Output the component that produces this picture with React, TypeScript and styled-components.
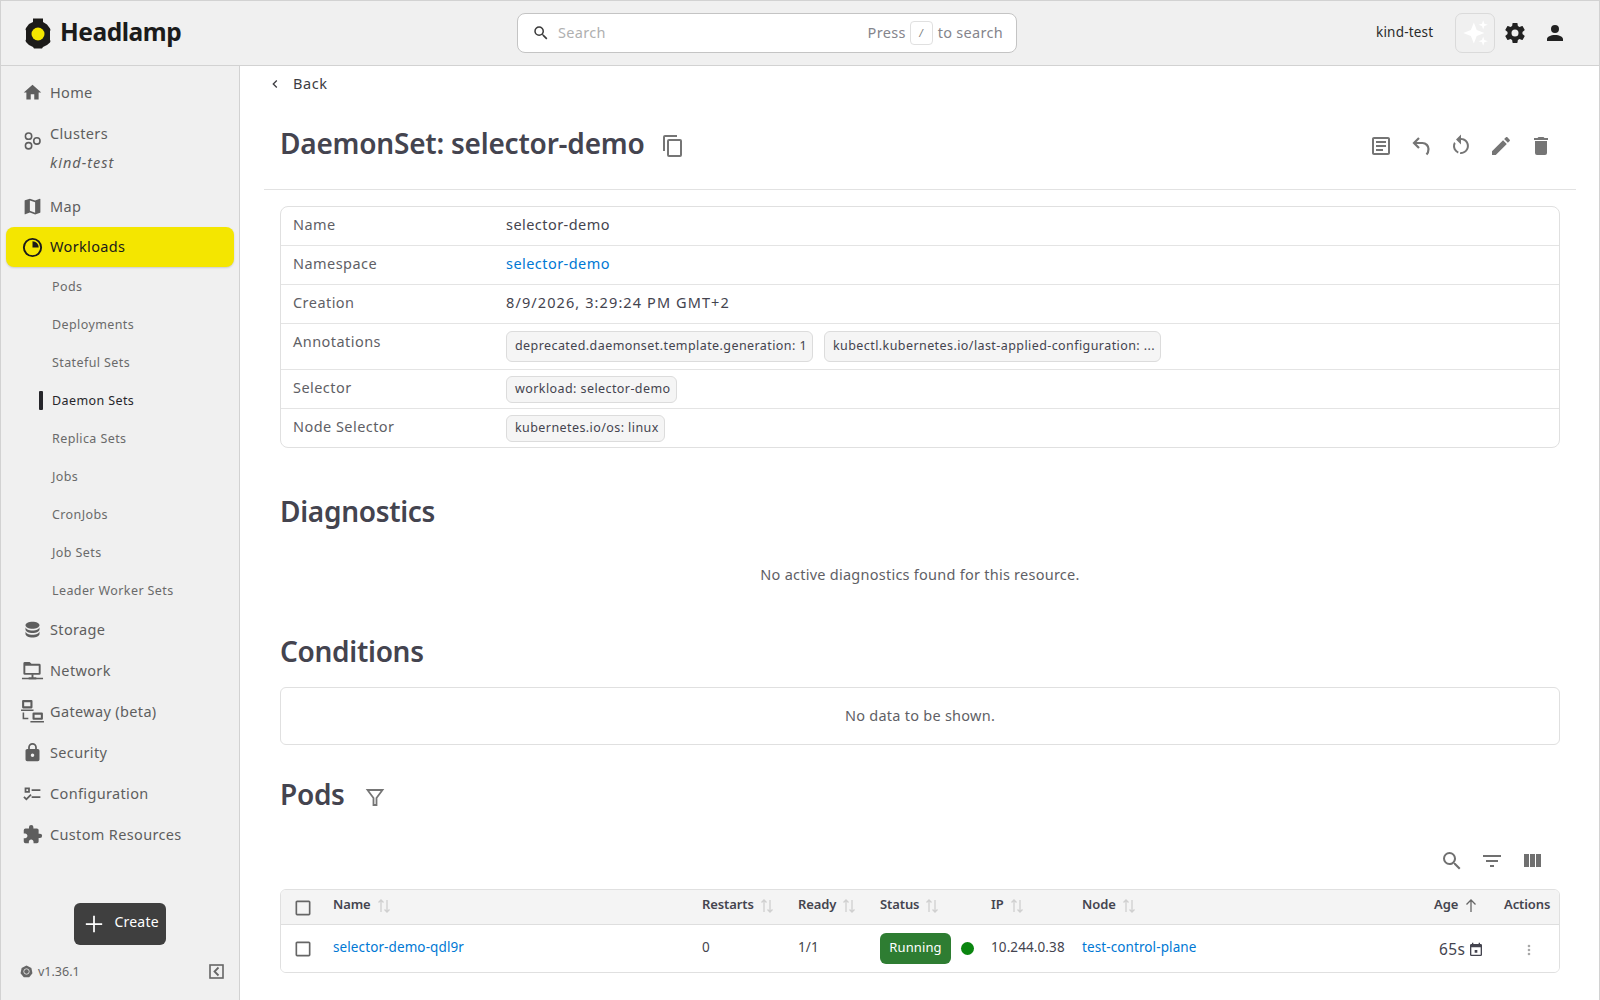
import React from "react";
import styled, { createGlobalStyle } from "styled-components";

const FONT = `"Noto Sans", "Liberation Sans", sans-serif`;

const Global = createGlobalStyle`
  html, body { margin: 0; padding: 0; background: #fff; }
  * { box-sizing: border-box; }
  body { font-family: ${FONT}; }
`;

const Frame = styled.div`
  width: 1600px;
  height: 1000px;
  display: flex;
  flex-direction: column;
  overflow: hidden;
  border: 1px solid #d2d2d2;
  border-bottom: 0;
  color: #44444f;
`;

/* top bar */
const TopBar = styled.header`
  height: 65px;
  flex: none;
  display: flex;
  align-items: center;
  background: #f0f0f0;
  border-bottom: 1px solid #d2d2d2;
  padding-left: 24px;
`;
const Brand = styled.div`
  width: 492px;
  display: flex;
  align-items: center;
  gap: 9px;
`;
const BrandName = styled.span`
  font-size: 24.5px;
  font-weight: 700;
  letter-spacing: -0.45px;
  color: #1b1b1b;
  padding-bottom: 3px;
`;
const SearchBox = styled.div`
  width: 500px;
  height: 40px;
  background: #fff;
  border: 1px solid #c4c4c4;
  border-radius: 8px;
  display: flex;
  align-items: center;
  padding: 0 13px 3px 14px;
  font-size: 14.5px;
  letter-spacing: 0.3px;
  color: #85858c;
`;
const SearchIcon = styled.span`
  display: flex;
  margin-top: 3px;
  color: #3a3a3a;
`;
const Placeholder = styled.span`
  margin-left: 8px;
  margin-right: auto;
  color: #b0b0b0;
`;
const Kbd = styled.span`
  width: 23px;
  height: 24px;
  margin: 3px 5px 0 4px;
  border: 1px solid #e0e0e0;
  border-radius: 4px;
  display: flex;
  align-items: center;
  justify-content: center;
  font-size: 10px;
  font-style: italic;
  color: #777;
`;
const TopRight = styled.div`
  flex: 1;
  display: flex;
  align-items: center;
  color: #2a2a2a;
`;
const ClusterName = styled.span`
  margin-left: 359px;
  width: 79px;
  padding-bottom: 2px;
  font-size: 13.5px;
  letter-spacing: 0.2px;
`;
const AiButton = styled.div`
  width: 40px;
  height: 40px;
  margin-right: 8px;
  border: 1px solid #dadada;
  border-radius: 7px;
  display: flex;
  align-items: center;
  justify-content: center;
  color: #fff;
`;
const TopIcon = styled.div`
  width: 24px;
  height: 24px;
  margin-right: 16px;
  color: #222;
`;

const Body = styled.div`
  flex: 1;
  display: flex;
  min-height: 0;
`;

/* sidebar */
const Sidebar = styled.aside`
  width: 239px;
  flex: none;
  background: #f0f0f0;
  border-right: 1px solid #d2d2d2;
  padding: 6px 0 0;
  display: flex;
  flex-direction: column;
`;
const NavItem = styled.div<{ $active?: boolean }>`
  height: 41px;
  flex: none;
  display: flex;
  align-items: center;
  gap: 7px;
  padding: 0 0 2px 21px;
  font-size: 14.5px;
  letter-spacing: 0.35px;
  color: ${(p) => (p.$active ? "#1a1a1a" : "#5e5e5e")};
  ${(p) =>
    p.$active &&
    `
    margin: 0 5px;
    padding-left: 16px;
    height: 40px;
    background: #f4e600;
    border-radius: 8px;
    box-shadow: 0 1px 2px rgba(0,0,0,.15);
  `}
`;
const NavIcon = styled.svg<{ $size?: number }>`
  width: ${(p) => p.$size ?? 21}px;
  height: ${(p) => p.$size ?? 21}px;
  margin: 2px ${(p) => (21 - (p.$size ?? 21)) / 2}px 0;
  flex: none;
  fill: currentColor;
`;
const ClusterItem = styled.div`
  height: 73px;
  flex: none;
  display: flex;
  align-items: center;
  gap: 7px;
  padding-left: 21px;
  color: #5e5e5e;
  font-size: 14.5px;
  letter-spacing: 0.35px;
`;
const ClusterGlyph = styled.svg`
  width: 21px;
  height: 21px;
  flex: none;
  margin-top: -18px;
  fill: none;
  stroke: currentColor;
  stroke-width: 1.8;
`;
const ClusterText = styled.div`
  display: flex;
  flex-direction: column;
  gap: 8px;
  margin-top: -3px;
  line-height: 21px;
  em {
    letter-spacing: 1px;
  }
`;
const SubNav = styled.div`
  display: flex;
  flex-direction: column;
`;
const SubItem = styled.div<{ $active?: boolean }>`
  height: 38px;
  display: flex;
  align-items: center;
  padding-left: ${(p) => (p.$active ? "38px" : "51px")};
  font-size: 12.5px;
  letter-spacing: 0.4px;
  color: ${(p) => (p.$active ? "#26262b" : "#6a6a6a")};
  &::before {
    content: "";
    display: ${(p) => (p.$active ? "block" : "none")};
    width: 4px;
    height: 19px;
    margin-right: 9px;
    border-radius: 1px;
    background: #26262b;
  }
`;
const SideFooter = styled.div`
  margin-top: auto;
  display: flex;
  flex-direction: column;
`;
const CreateButton = styled.div`
  align-self: center;
  width: 92px;
  height: 42px;
  margin-left: -1px;
  background: #3f3f3f;
  border-radius: 6px;
  display: flex;
  align-items: center;
  gap: 7px;
  padding-left: 6px;
  color: #fff;
  font-size: 14px;
  letter-spacing: 0.2px;
`;
const CreateLabel = styled.span`
  padding-bottom: 6px;
`;
const VersionRow = styled.div`
  height: 55px;
  display: flex;
  align-items: center;
  padding: 0 15px 2px 19px;
  font-size: 12.5px;
  color: #666;
  gap: 5px;
`;
const CollapseBox = styled.svg`
  margin-left: auto;
  width: 15px;
  height: 15px;
  fill: none;
  stroke: #666;
  stroke-width: 1.6;
`;

/* main */
const Main = styled.main`
  flex: 1;
  min-width: 0;
  padding: 0 23px 0 24px;
  background: #fff;
`;
const BackRow = styled.div`
  height: 36px;
  display: flex;
  align-items: center;
  gap: 10px;
  padding: 0 0 2px 3px;
  font-size: 14.5px;
  letter-spacing: 0.55px;
  color: #3c3c42;
`;
const BackChevron = styled.span`
  display: flex;
  margin-top: 2px;
`;
const TitleRow = styled.div`
  height: 88px;
  display: flex;
  align-items: center;
  padding: 0 23px 6px 16px;
  border-bottom: 1px solid #e2e2e2;
`;
const Title = styled.h1`
  margin: 0;
  font-size: 28px;
  line-height: 40px;
  font-weight: 600;
  letter-spacing: -0.22px;
  color: #44444f;
`;
const CopyButton = styled.span`
  margin: 6px 0 0 16px;
  color: #757575;
`;
const Actions = styled.div`
  margin: 6px 0 0 auto;
  display: flex;
  gap: 16px;
  color: #757575;
`;
const ActionIcon = styled.svg<{ $size?: number }>`
  width: ${(p) => p.$size ?? 24}px;
  height: ${(p) => p.$size ?? 24}px;
  fill: currentColor;
  display: block;
`;
const StrokeIcon = styled.svg`
  width: 24px;
  height: 24px;
  display: block;
  fill: none;
  stroke: currentColor;
`;
const Content = styled.div`
  padding: 0 16px;
`;
const InfoTable = styled.div`
  margin-top: 16px;
  border: 1px solid #e0e0e0;
  border-radius: 8px;
`;
const InfoRow = styled.div<{ $height: number }>`
  height: ${(p) => p.$height}px;
  display: grid;
  grid-template-columns: 213px 1fr;
  padding-left: 12px;
  font-size: 14.5px;
  letter-spacing: 0.45px;
  & + & {
    border-top: 1px solid #e4e4e4;
  }
`;
const InfoLabel = styled.div`
  color: #5f5f66;
  padding-top: 7px;
  line-height: 20px;
`;
const InfoValue = styled.div`
  color: #44444f;
  display: flex;
  gap: 11px;
  align-items: center;
  padding-bottom: 4px;
`;
const Timestamp = styled.span`
  letter-spacing: 1.1px;
`;
const Link = styled.span`
  color: #0078d4;
`;
const Chip = styled.span<{ $tall?: boolean }>`
  height: ${(p) => (p.$tall ? 31 : 27)}px;
  margin-top: 4px;
  display: inline-flex;
  align-items: center;
  padding: 0 5px 2px 8px;
  background: #f5f5f5;
  border: 1px solid #dcdcdc;
  border-radius: 6px;
  font-size: 12.5px;
  letter-spacing: 0.42px;
  color: #44444f;
  white-space: nowrap;
`;
const SectionTitle = styled.h2<{ $gap: number }>`
  margin: ${(p) => p.$gap}px 0 0;
  font-size: 28px;
  line-height: 40px;
  font-weight: 600;
  letter-spacing: -0.3px;
  color: #44444f;
  display: flex;
  align-items: center;
  gap: 18px;
`;
const PodsFilter = styled.span`
  margin-top: 6px;
  color: #757575;
`;
const Message = styled.div`
  margin-top: 33px;
  text-align: center;
  font-size: 14.5px;
  line-height: 20px;
  letter-spacing: 0.25px;
  color: #5f5f66;
`;
const EmptyBox = styled.div`
  margin-top: 16px;
  height: 58px;
  padding-bottom: 3px;
  border: 1px solid #e0e0e0;
  border-radius: 6px;
  display: flex;
  align-items: center;
  justify-content: center;
  font-size: 14.5px;
  letter-spacing: 0.25px;
  color: #5f5f66;
`;
const TableTools = styled.div`
  margin-top: 27px;
  height: 40px;
  display: flex;
  justify-content: flex-end;
  align-items: center;
  gap: 16px;
  padding-right: 16px;
  color: #707070;
`;
const PodTable = styled.div`
  margin-top: 8px;
  border: 1px solid #e0e0e0;
  border-radius: 6px;
  overflow: hidden;
`;
const PodRow = styled.div<{ $head?: boolean }>`
  display: grid;
  grid-template-columns: 52px 369px 96px 82px 111px 91px 352px 70px 56px;
  align-items: center;
  height: ${(p) => (p.$head ? 35 : 47)}px;
  background: ${(p) => (p.$head ? "#f4f4f4" : "#fff")};
  ${(p) => p.$head && "border-bottom: 1px solid #dedede;"}
  font-size: ${(p) => (p.$head ? "13px" : "13.5px")};
  font-weight: ${(p) => (p.$head ? 600 : 400)};
  letter-spacing: ${(p) => (p.$head ? "-0.1px" : "0.1px")};
  color: #44444f;
  > span {
    margin-bottom: 4px;
  }
`;
const HeadCell = styled.div`
  display: flex;
  align-items: center;
  gap: 6px;
  padding-bottom: 6px;
  white-space: nowrap;
`;
const CheckCell = styled.div<{ $head?: boolean }>`
  display: flex;
  padding-left: 12px;
  margin-top: ${(p) => (p.$head ? 2 : 0)}px;
  color: #666;
`;
const CheckIcon = styled.svg`
  width: 20px;
  height: 20px;
  fill: currentColor;
`;
const SortIcon = styled.svg<{ $active?: boolean }>`
  width: 14px;
  height: 16px;
  margin-top: 4px;
  fill: none;
  stroke: ${(p) => (p.$active ? "#666" : "#cfcfcf")};
  stroke-width: 1.3;
`;
const StatusCell = styled.div`
  display: flex;
  align-items: center;
  gap: 10px;
`;
const StatusChip = styled.span`
  height: 31px;
  width: 71px;
  padding-bottom: 3px;
  display: flex;
  align-items: center;
  justify-content: center;
  border-radius: 6px;
  background: #2e7d32;
  color: #fff;
  font-size: 13px;
`;
const StatusDot = styled.span`
  width: 13px;
  height: 13px;
  border-radius: 50%;
  background: #0a850f;
`;
const AgeCell = styled.div`
  display: flex;
  align-items: center;
  gap: 3px;
  padding-left: 5px;
  font-size: 15.5px;
  letter-spacing: 0.4px;
`;
const SmallIcon = styled.svg`
  width: 16px;
  height: 16px;
  margin-top: 2px;
  fill: currentColor;
  flex: none;
`;
const MoreCell = styled.div`
  display: flex;
  padding-left: 17px;
  color: #a8a8a8;
`;

const P = {
  home: "M10,20V14H14V20H19V12H22L12,3L2,12H5V20H10Z",
  map: "M15,19L9,16.89V5L15,7.11M20.5,3C20.44,3 20.39,3 20.34,3L15,5.1L9,3L3.36,4.9C3.15,4.97 3,5.15 3,5.38V20.5A0.5,0.5 0 0,0 3.5,21L3.66,20.97L9,18.9L15,21L20.64,19.1C20.85,19 21,18.85 21,18.62V3.5A0.5,0.5 0 0,0 20.5,3Z",
  database: "M12,3C7.58,3 4,4.79 4,7C4,9.21 7.58,11 12,11C16.42,11 20,9.21 20,7C20,4.79 16.42,3 12,3M4,9V12C4,14.21 7.58,16 12,16C16.42,16 20,14.21 20,12V9C20,11.21 16.42,13 12,13C7.58,13 4,11.21 4,9M4,14V17C4,19.21 7.58,21 12,21C16.42,21 20,19.21 20,17V14C20,16.21 16.42,18 12,18C7.58,18 4,16.21 4,14Z",
  lock: "M12,17A2,2 0 0,0 14,15C14,13.89 13.1,13 12,13A2,2 0 0,0 10,15A2,2 0 0,0 12,17M18,8A2,2 0 0,1 20,10V20A2,2 0 0,1 18,22H6A2,2 0 0,1 4,20V10C4,8.89 4.9,8 6,8H7V6A5,5 0 0,1 12,1A5,5 0 0,1 17,6V8H18M12,3A3,3 0 0,0 9,6V8H15V6A3,3 0 0,0 12,3Z",
  checks: "M3,5H9V11H3V5M5,7V9H7V7H5M11,7H21V9H11V7M11,15H21V17H11V15M5,20L1.5,16.5L2.91,15.09L5,17.17L9.59,12.59L11,14L5,20Z",
  puzzle: "M20.5,11H19V7C19,5.89 18.1,5 17,5H13V3.5A2.5,2.5 0 0,0 10.5,1A2.5,2.5 0 0,0 8,3.5V5H4A2,2 0 0,0 2,7V10.8H3.5C5,10.8 6.2,12 6.2,13.5C6.2,15 5,16.2 3.5,16.2H2V20A2,2 0 0,0 4,22H7.8V20.5C7.8,19 9,17.8 10.5,17.8C12,17.8 13.2,19 13.2,20.5V22H17A2,2 0 0,0 19,20V16H20.5A2.5,2.5 0 0,0 23,13.5A2.5,2.5 0 0,0 20.5,11Z",
  copy: "M19,21H8V7H19M19,5H8A2,2 0 0,0 6,7V21A2,2 0 0,0 8,23H19A2,2 0 0,0 21,21V7A2,2 0 0,0 19,5M16,1H4A2,2 0 0,0 2,3V17H4V3H16V1Z",
  text: "M5,3C3.89,3 3,3.89 3,5V19C3,20.11 3.89,21 5,21H19C20.11,21 21,20.11 21,19V5C21,3.89 20.11,3 19,3H5M5,5H19V19H5V5M7,7V9H17V7H7M7,11V13H17V11H7M7,15V17H14V15H7Z",
  restart: "M12,4C14.1,4 16.1,4.8 17.6,6.3C20.7,9.4 20.7,14.5 17.6,17.6C15.8,19.5 13.3,20.2 10.9,19.9L11.4,17.9C13.1,18.1 14.9,17.5 16.2,16.2C18.5,13.9 18.5,10.1 16.2,7.7C15.1,6.6 13.5,6 12,6V10.6L7,5.6L12,0.6V4M6.3,17.6C3.7,15 3.3,11 5.1,7.9L6.6,9.4C5.5,11.6 5.9,14.4 7.8,16.2C8.3,16.7 8.9,17.1 9.6,17.4L9,19.4C8,19 7.1,18.4 6.3,17.6Z",
  pencil: "M20.71,7.04C21.1,6.65 21.1,6 20.71,5.63L18.37,3.29C18,2.9 17.35,2.9 16.96,3.29L15.12,5.12L18.87,8.87M3,17.25V21H6.75L17.81,9.93L14.06,6.18L3,17.25Z",
  trash: "M19,4H15.5L14.5,3H9.5L8.5,4H5V6H19M6,19A2,2 0 0,0 8,21H16A2,2 0 0,0 18,19V7H6V19Z",
  cog: "M12,15.5A3.5,3.5 0 0,1 8.5,12A3.5,3.5 0 0,1 12,8.5A3.5,3.5 0 0,1 15.5,12A3.5,3.5 0 0,1 12,15.5M19.43,12.97C19.47,12.65 19.5,12.33 19.5,12C19.5,11.67 19.47,11.34 19.43,11L21.54,9.37C21.73,9.22 21.78,8.95 21.66,8.73L19.66,5.27C19.54,5.05 19.27,4.96 19.05,5.05L16.56,6.05C16.04,5.66 15.5,5.32 14.87,5.07L14.5,2.42C14.46,2.18 14.25,2 14,2H10C9.75,2 9.54,2.18 9.5,2.42L9.13,5.07C8.5,5.32 7.96,5.66 7.44,6.05L4.95,5.05C4.73,4.96 4.46,5.05 4.34,5.27L2.34,8.73C2.21,8.95 2.27,9.22 2.46,9.37L4.57,11C4.53,11.34 4.5,11.67 4.5,12C4.5,12.33 4.53,12.65 4.57,12.97L2.46,14.63C2.27,14.78 2.21,15.05 2.34,15.27L4.34,18.73C4.46,18.95 4.73,19.03 4.95,18.95L7.44,17.94C7.96,18.34 8.5,18.68 9.13,18.93L9.5,21.58C9.54,21.82 9.75,22 10,22H14C14.25,22 14.46,21.82 14.5,21.58L14.87,18.93C15.5,18.67 16.04,18.34 16.56,17.94L19.05,18.95C19.27,19.03 19.54,18.95 19.66,18.73L21.66,15.27C21.78,15.05 21.73,14.78 21.54,14.63L19.43,12.97Z",
  account: "M12,4A4,4 0 0,1 16,8A4,4 0 0,1 12,12A4,4 0 0,1 8,8A4,4 0 0,1 12,4M12,14C16.42,14 20,15.79 20,18V20H4V18C4,15.79 7.58,14 12,14Z",
  magnify: "M9.5,3A6.5,6.5 0 0,1 16,9.5C16,11.11 15.41,12.59 14.44,13.73L14.71,14H15.5L20.5,19L19,20.5L14,15.5V14.71L13.73,14.44C12.59,15.41 11.11,16 9.5,16A6.5,6.5 0 0,1 3,9.5A6.5,6.5 0 0,1 9.5,3M9.5,5C7,5 5,7 5,9.5C5,12 7,14 9.5,14C12,14 14,12 14,9.5C14,7 12,5 9.5,5Z",
  filterVariant: "M6,13H18V11H6M3,6V8H21V6M10,18H14V16H10V18Z",
  columns: "M16,5V18H21V5M4,18H9V5H4M10,18H15V5H10V18Z",
  calendar: "M19,3H18V1H16V3H8V1H6V3H5C3.89,3 3,3.9 3,5V19A2,2 0 0,0 5,21H19A2,2 0 0,0 21,19V5A2,2 0 0,0 19,3M19,19H5V8H19V19M10,12H14V16H10V12Z",
  dots: "M12,16A2,2 0 0,1 14,18A2,2 0 0,1 12,20A2,2 0 0,1 10,18A2,2 0 0,1 12,16M12,10A2,2 0 0,1 14,12A2,2 0 0,1 12,14A2,2 0 0,1 10,12A2,2 0 0,1 12,10M12,4A2,2 0 0,1 14,6A2,2 0 0,1 12,8A2,2 0 0,1 10,6A2,2 0 0,1 12,4Z",
  box: "M19,3H5C3.89,3 3,3.89 3,5V19A2,2 0 0,0 5,21H19A2,2 0 0,0 21,19V5C21,3.89 20.1,3 19,3M19,5V19H5V5H19Z",
  chevron: "M15.41,16.58L10.83,12L15.41,7.41L14,6L8,12L14,18L15.41,16.58Z",
  plus: "M19,12.75H12.75V19H11.25V12.75H5V11.25H11.25V5H12.75V11.25H19V12.75Z",
  spark: "M11 3l2.500 6.500L20 12l-6.500 2.500L11 21l-2.500-6.500L2 12l6.500-2.500zM19 1l1 3 3 1-3 1-1 3-1-3-3-1 3-1zM19 15l1 3 3 1-3 1-1 3-1-3-3-1 3-1z",
};

const Glyph = ({ d, size }: { d: string; size?: number }) => (
  <ActionIcon viewBox="0 0 24 24" $size={size}>
    <path d={d} />
  </ActionIcon>
);

const Logo = () => (
  <svg width="26" height="31" viewBox="0 0 26 31">
    <path
      fill="#1c1b19"
      d="M8 .5h10V4l4 2.500 3 4 .5 1.500-.5 1v9l.5 1-.5 1.500L22 27l-4 2-1 1.500H9L8 29l-4-2-3-3-.5-1.500.5-1v-9l-.5-1 .5-1.500 3-4L8 4z"
    />
    <circle cx="13" cy="16" r="6.500" fill="#f4e600" />
  </svg>
);

const ClusterIcon = () => (
  <ClusterGlyph viewBox="0 0 24 24">
    <circle cx="7.500" cy="7" r="3.600" />
    <circle cx="7.500" cy="18" r="3.600" />
    <circle cx="17" cy="12.500" r="3.600" />
  </ClusterGlyph>
);

const WorkloadIcon = () => (
  <NavIcon viewBox="0 0 24 24" $size={23}>
    <path d="M12 2a10 10 0 1 0 0 20 10 10 0 0 0 0-20zm0 2a8 8 0 1 1 0 16 8 8 0 0 1 0-16z" />
    <path d="M12 5.500V12h6.500A6.500 6.500 0 0 0 12 5.500z" />
  </NavIcon>
);

const NetworkIcon = () => (
  <NavIcon viewBox="0 0 24 24" $size={23}>
    <path d="M4 3h5l2 2h8a1.500 1.500 0 0 1 1.500 1.500V15a1.500 1.500 0 0 1-1.500 1.500H4A1.500 1.500 0 0 1 2.500 15V4.500A1.500 1.500 0 0 1 4 3zm.500 4v7.500h14V7z" />
    <path d="M11 16h2v3h3v.5h7v1.500h-7v.5H8v-.5H1v-1.500h7V19h3z" />
  </NavIcon>
);

const GatewayIcon = () => (
  <NavIcon viewBox="0 0 24 24" $size={25}>
    <path d="M3 1h8a1 1 0 0 1 1 1v6a1 1 0 0 1-1 1H3a1 1 0 0 1-1-1V2a1 1 0 0 1 1-1zm1 2v4h6V3zM1 10h12v1.500H1z" />
    <path d="M2.500 13H4v5h4v1.500H2.500z" />
    <path d="M13 13h8a1 1 0 0 1 1 1v5a1 1 0 0 1-1 1h-8a1 1 0 0 1-1-1v-5a1 1 0 0 1 1-1zm1 2v3h6v-3zM10 21h13v1.500H10z" />
  </NavIcon>
);

const KubeDot = () => (
  <svg width="13" height="13" viewBox="0 0 24 24">
    <path fill="#666" d="M12 1l9 4.500 2 9.500-6 7.500H7L1 15l2-9.500z" />
    <circle cx="12" cy="12" r="5" fill="none" stroke="#f0f0f0" strokeWidth="1.500" />
  </svg>
);

const Sort = () => (
  <SortIcon viewBox="0 0 14 16">
    <path d="M4 14V2M1.500 4.500L4 2l2.500 2.500" />
    <path d="M10 2v12M7.500 11.500L10 14l2.500-2.500" />
  </SortIcon>
);

const Check = ({ head }: { head?: boolean }) => (
  <CheckCell $head={head}>
    <CheckIcon viewBox="0 0 24 24">
      <path d={P.box} />
    </CheckIcon>
  </CheckCell>
);

const Head = ({ label, sort = true }: { label: string; sort?: boolean }) => (
  <HeadCell>
    {label}
    {sort && <Sort />}
  </HeadCell>
);

const simpleNav: [string, React.ReactNode][] = [
  ["Storage", <NavIcon viewBox="0 0 24 24"><path d={P.database} /></NavIcon>],
  ["Network", <NetworkIcon />],
  ["Gateway (beta)", <GatewayIcon />],
  ["Security", <NavIcon viewBox="0 0 24 24"><path d={P.lock} /></NavIcon>],
  ["Configuration", <NavIcon viewBox="0 0 24 24"><path d={P.checks} /></NavIcon>],
  ["Custom Resources", <NavIcon viewBox="0 0 24 24"><path d={P.puzzle} /></NavIcon>],
];

const subNav = ["Pods", "Deployments", "Stateful Sets", "Daemon Sets", "Replica Sets", "Jobs", "CronJobs", "Job Sets", "Leader Worker Sets"];

const App = () => (
  <>
    <Global />
    <Frame>
      <TopBar>
        <Brand>
          <Logo />
          <BrandName>Headlamp</BrandName>
        </Brand>
        <SearchBox>
          <SearchIcon><Glyph d={P.magnify} size={18} /></SearchIcon>
          <Placeholder>Search</Placeholder>
          Press<Kbd>/</Kbd>to search
        </SearchBox>
        <TopRight>
          <ClusterName>kind-test</ClusterName>
          <AiButton><Glyph d={P.spark} size={28} /></AiButton>
          <TopIcon><Glyph d={P.cog} /></TopIcon>
          <TopIcon><Glyph d={P.account} /></TopIcon>
        </TopRight>
      </TopBar>
      <Body>
        <Sidebar>
          <NavItem><NavIcon viewBox="0 0 24 24"><path d={P.home} /></NavIcon>Home</NavItem>
          <ClusterItem>
            <ClusterIcon />
            <ClusterText>
              <span>Clusters</span>
              <em>kind-test</em>
            </ClusterText>
          </ClusterItem>
          <NavItem><NavIcon viewBox="0 0 24 24"><path d={P.map} /></NavIcon>Map</NavItem>
          <NavItem $active><WorkloadIcon />Workloads</NavItem>
          <SubNav>
            {subNav.map((s) => (
              <SubItem key={s} $active={s === "Daemon Sets"}>{s}</SubItem>
            ))}
          </SubNav>
          {simpleNav.map(([label, icon]) => (
            <NavItem key={label}>{icon}{label}</NavItem>
          ))}
          <SideFooter>
            <CreateButton><Glyph d={P.plus} size={28} /><CreateLabel>Create</CreateLabel></CreateButton>
            <VersionRow>
              <KubeDot />
              v1.36.1
              <CollapseBox viewBox="0 0 15 15">
                <rect x="1" y="1" width="13" height="13" />
                <path d="M9.500 3.500L5.500 7.500l4 4" strokeWidth="1.800" />
              </CollapseBox>
            </VersionRow>
          </SideFooter>
        </Sidebar>
        <Main>
          <BackRow><BackChevron><Glyph d={P.chevron} size={16} /></BackChevron>Back</BackRow>
          <TitleRow>
            <Title>DaemonSet: selector-demo</Title>
            <CopyButton><Glyph d={P.copy} /></CopyButton>
            <Actions>
              <Glyph d={P.text} />
              <StrokeIcon viewBox="0 0 24 24" strokeWidth="2.200">
                <path d="M10 4L5 9l5 5M5 9h8.500C17 9 19.500 12 19.500 15c0 2-.5 4-2 5.500" />
              </StrokeIcon>
              <Glyph d={P.restart} />
              <Glyph d={P.pencil} />
              <Glyph d={P.trash} />
            </Actions>
          </TitleRow>
          <Content>
            <InfoTable>
              <InfoRow $height={38}>
                <InfoLabel>Name</InfoLabel>
                <InfoValue>selector-demo</InfoValue>
              </InfoRow>
              <InfoRow $height={39}>
                <InfoLabel>Namespace</InfoLabel>
                <InfoValue><Link>selector-demo</Link></InfoValue>
              </InfoRow>
              <InfoRow $height={39}>
                <InfoLabel>Creation</InfoLabel>
                <InfoValue><Timestamp>8/9/2026, 3:29:24 PM GMT+2</Timestamp></InfoValue>
              </InfoRow>
              <InfoRow $height={46}>
                <InfoLabel>Annotations</InfoLabel>
                <InfoValue>
                  <Chip $tall>deprecated.daemonset.template.generation: 1</Chip>
                  <Chip $tall>kubectl.kubernetes.io/last-applied-configuration: ...</Chip>
                </InfoValue>
              </InfoRow>
              <InfoRow $height={39}>
                <InfoLabel>Selector</InfoLabel>
                <InfoValue><Chip>workload: selector-demo</Chip></InfoValue>
              </InfoRow>
              <InfoRow $height={39}>
                <InfoLabel>Node Selector</InfoLabel>
                <InfoValue><Chip>kubernetes.io/os: linux</Chip></InfoValue>
              </InfoRow>
            </InfoTable>
            <SectionTitle $gap={43}>Diagnostics</SectionTitle>
            <Message>No active diagnostics found for this resource.</Message>
            <SectionTitle $gap={47}>Conditions</SectionTitle>
            <EmptyBox>No data to be shown.</EmptyBox>
            <SectionTitle $gap={29}>
              Pods
              <PodsFilter>
                <StrokeIcon viewBox="0 0 24 24" strokeWidth="1.800">
                  <path d="M4.500 5h15l-6 8v7h-3v-7z" />
                </StrokeIcon>
              </PodsFilter>
            </SectionTitle>
            <TableTools>
              <Glyph d={P.magnify} />
              <Glyph d={P.filterVariant} />
              <Glyph d={P.columns} />
            </TableTools>
            <PodTable>
              <PodRow $head>
                <Check head />
                <Head label="Name" />
                <Head label="Restarts" />
                <Head label="Ready" />
                <Head label="Status" />
                <Head label="IP" />
                <Head label="Node" />
                <HeadCell>Age<SortIcon $active viewBox="0 0 14 16"><path d="M7 14V2M2.500 6.500L7 2l4.500 4.500" /></SortIcon></HeadCell>
                <Head label="Actions" sort={false} />
              </PodRow>
              <PodRow>
                <Check />
                <Link>selector-demo-qdl9r</Link>
                <span>0</span>
                <span>1/1</span>
                <StatusCell><StatusChip>Running</StatusChip><StatusDot /></StatusCell>
                <span>10.244.0.38</span>
                <Link>test-control-plane</Link>
                <AgeCell>65s<SmallIcon viewBox="0 0 24 24"><path d={P.calendar} /></SmallIcon></AgeCell>
                <MoreCell><SmallIcon viewBox="0 0 24 24"><path d={P.dots} /></SmallIcon></MoreCell>
              </PodRow>
            </PodTable>
          </Content>
        </Main>
      </Body>
    </Frame>
  </>
);

export default App;
